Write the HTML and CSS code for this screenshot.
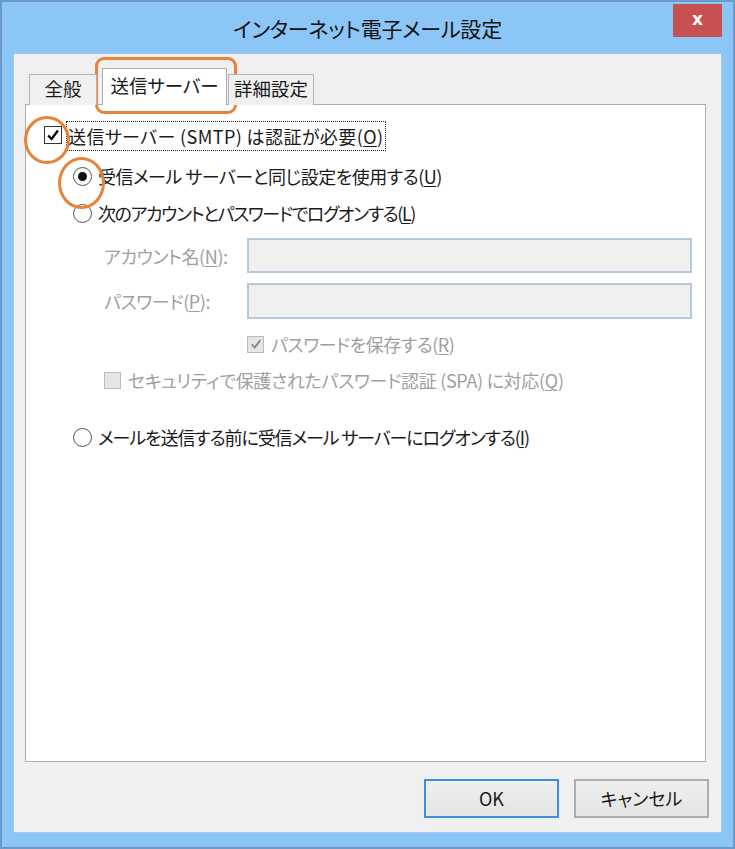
FILE: index.html
```html
<!DOCTYPE html>
<html lang="ja">
<head>
<meta charset="utf-8">
<title>インターネット電子メール設定</title>
<link rel="stylesheet" href="styles.css">
</head>
<body>
<div class="window">
  <div class="titlebar">
    <span class="spacer"></span>
    <span class="title">インターネット電子メール設定</span>
    <span class="close">x</span>
  </div>
  <div class="content">
    <div class="tabstrip">
      <div class="tab">全般</div>
      <div class="tab active">送信サーバー</div>
      <div class="tab">詳細設定</div>
    </div>
    <div class="panel">
      <div class="row row1">
        <span class="check on"><svg viewBox="0 0 18 18" width="16" height="16"><path d="M3.5 9.5 L7.5 13.5 L14.5 4" fill="none" stroke="#000" stroke-width="2.6"/></svg></span>
        <span class="focus wide">送信サーバー (SMTP) は認証が必要(<u>O</u>)</span>
      </div>
      <div class="row row2 indent-radio">
        <span class="radio on"><span class="dot"></span></span>
        <span class="lbl t05">受信メール サーバーと同じ設定を使用する(<u>U</u>)</span>
      </div>
      <div class="row row3 indent-radio">
        <span class="radio"></span>
        <span class="lbl t15">次のアカウントとパスワードでログオンする(<u>L</u>)</span>
      </div>
      <div class="row field row4">
        <span class="flabel">アカウント名(<u>N</u>):</span>
        <span class="input"></span>
      </div>
      <div class="row field row5">
        <span class="flabel">パスワード(<u>P</u>):</span>
        <span class="input"></span>
      </div>
      <div class="row row6 indent-save">
        <span class="check dis"><svg viewBox="0 0 18 18" width="14" height="14"><path d="M3.5 9.5 L7.5 13.5 L14.5 4" fill="none" stroke="#8a8a8a" stroke-width="2.6"/></svg></span>
        <span class="lbl dim t05">パスワードを保存する(<u>R</u>)</span>
      </div>
      <div class="row row7 indent-spa">
        <span class="check dis"></span>
        <span class="lbl dim t03">セキュリティで保護されたパスワード認証 (SPA) に対応(<u>Q</u>)</span>
      </div>
      <div class="row row8 indent-radio">
        <span class="radio"></span>
        <span class="lbl t11">メールを送信する前に受信メール サーバーにログオンする(<u>I</u>)</span>
      </div>
    </div>
    <div class="footer">
      <button class="btn default">OK</button>
      <button class="btn">キャンセル</button>
    </div>
  </div>
  <span class="mark mark-tab"></span>
  <span class="mark mark-check"></span>
  <span class="mark mark-radio"></span>
</div>
</body>
</html>
```
FILE: styles.css
```css
* { box-sizing: border-box; }
html, body { margin: 0; padding: 0; }
body {
  font-family: "Noto Sans CJK JP", "Noto Sans", sans-serif;
  font-feature-settings: "palt";
  color: #1a1a1a;
  background: #fff;
}
.window {
  position: relative;
  width: 735px;
  height: 849px;
  border: 2px solid #6d9ac4;
  background: #8cc6f6;
  display: flex;
  flex-direction: column;
  padding: 0 11px 14px 11px;
}
.titlebar {
  height: 51px;
  display: grid;
  grid-template-columns: 1fr auto 1fr;
  align-items: start;
}
.title {
  font-size: 21px;
  line-height: 1;
  padding-top: 16px;
  color: #111;
  letter-spacing: -0.2px;
}
.close {
  justify-self: end;
  margin-top: 2px;
  width: 49px;
  height: 33px;
  background: #c75050;
  color: #fff;
  font-family: "DejaVu Sans", sans-serif;
  font-weight: bold;
  font-size: 17px;
  display: flex;
  align-items: center;
  justify-content: center;
  padding-bottom: 3px;
}
.content {
  flex: 1;
  background: #f0f0f0;
  border: 1px solid #a6c8e8;
  display: flex;
  flex-direction: column;
  padding: 14px 15px 14px 11px;
}
.tabstrip {
  display: flex;
  align-items: flex-end;
  padding-left: 4px;
  height: 37px;
  position: relative;
  z-index: 1;
  margin-bottom: -1px;
}
.tab {
  height: 31px;
  border: 1px solid #b5b5b5;
  border-bottom: none;
  background: #f0f0f0;
  font-size: 18.5px;
  line-height: 1;
  white-space: nowrap;
  display: flex;
  align-items: center;
  justify-content: center;
  padding: 0 2px 3px 2px;
  color: #1a1a1a;
}
.tab:first-child { width: 68px; margin-right: 5px; }
.tab.active {
  height: 37px;
  width: 125px;
  background: #fff;
  border-color: #acacac;
  padding-bottom: 4px;
}
.tab:last-child { width: 86px; margin-left: 1px; }
.panel {
  height: 658px;
  background: #fff;
  border: 1px solid #adadad;
  display: flex;
  flex-direction: column;
  padding: 16px 13px 0 0;
}
.row {
  display: flex;
  align-items: center;
  font-size: 18px;
  line-height: 1;
  height: 30px;
  white-space: nowrap;
}
.row1 { padding-left: 18px; }
.row2 { margin-top: 10px; }
.row3 { margin-top: 7px; }
.row4 { margin-top: 10px; height: 35px; }
.row5 { margin-top: 10px; height: 36px; }
.row6 { margin-top: 10px; }
.row7 { margin-top: 6px; }
.row8 { margin-top: 27px; }
.indent-radio { padding-left: 47px; }
.indent-save { padding-left: 221px; }
.indent-spa { padding-left: 78px; }
.wide { letter-spacing: 0.4px; }
.t03 { letter-spacing: -0.3px; }
.t05 { letter-spacing: -0.5px; }
.t11 { letter-spacing: -1.1px; }
.t15 { letter-spacing: -1.4px; }
.check {
  width: 18px;
  height: 18px;
  border: 1px solid #333;
  background: #fff;
  display: flex;
  align-items: center;
  justify-content: center;
  flex: none;
  margin-top: -3px;
}
.check.dis {
  width: 17px;
  height: 17px;
  border-color: #bcbcbc;
  background: #e6e6e6;
  margin-top: 0;
}
.focus {
  margin-left: 4px;
  height: 30px;
  display: flex;
  align-items: center;
  padding: 0 2px 0 1px;
  border: 1px dotted #222;
}
.radio {
  width: 19px;
  height: 19px;
  border-radius: 50%;
  border: 1px solid #555;
  background: #fff;
  display: flex;
  align-items: center;
  justify-content: center;
  flex: none;
}
.radio .dot {
  width: 9px;
  height: 9px;
  border-radius: 50%;
  background: #111;
}
.lbl { margin-left: 6px; }
.indent-save .lbl, .indent-spa .lbl { margin-left: 7px; }
.dim { color: #a0a0a0; }
.field { padding-left: 78px; }
.flabel {
  width: 143px;
  color: #a0a0a0;
  flex: none;
  letter-spacing: -0.4px;
}
.input {
  flex: 1;
  height: 100%;
  background: #f0f0f0;
  border: 2px solid #b5c9dc;
}
u { text-decoration-thickness: 1px; text-underline-offset: 2px; }
.footer {
  display: flex;
  justify-content: flex-end;
  gap: 15px;
  margin-top: 17px;
  margin-right: -3px;
}
.btn {
  width: 135px;
  height: 39px;
  font-family: "Noto Sans CJK JP", "Noto Sans", sans-serif;
  font-feature-settings: "palt";
  font-size: 18px;
  color: #1a1a1a;
  background: linear-gradient(#efefef, #e4e4e4);
  border: 2px solid #adadad;
  padding: 0 0 2px 0;
}
.btn.default { border-color: #3d8ee0; }
.mark {
  position: absolute;
  border: 3px solid #e8833a;
  pointer-events: none;
}
.mark-tab {
  left: 93px;
  top: 55px;
  width: 142px;
  height: 57px;
  border-radius: 9px;
}
.mark-check {
  left: 22px;
  top: 114px;
  width: 46px;
  height: 48px;
  border-radius: 50%;
}
.mark-radio {
  left: 56px;
  top: 155px;
  width: 47px;
  height: 52px;
  border-radius: 50%;
}
```
